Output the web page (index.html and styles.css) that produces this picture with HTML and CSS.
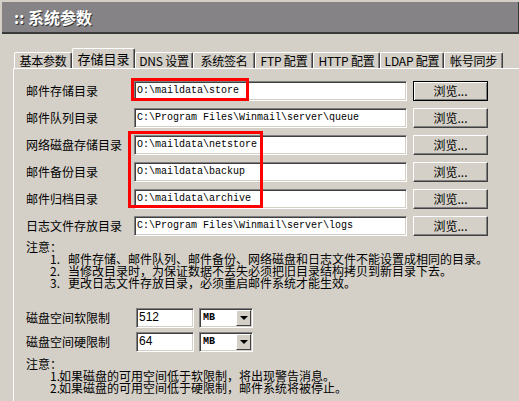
FILE: index.html
```html
<!DOCTYPE html>
<html lang="zh-CN">
<head>
	<meta charset="UTF-8">
	<title>系统参数</title>
	<link rel="stylesheet" href="styles.css">
</head>
<body>
	<div class="title">:: 系统参数</div>

	<div class="tabs">
		<span class="tab">基本参数</span>
		<span class="tab on">存储目录</span>
		<span class="tab">DNS 设置</span>
		<span class="tab">系统签名</span>
		<span class="tab">FTP 配置</span>
		<span class="tab">HTTP 配置</span>
		<span class="tab">LDAP 配置</span>
		<span class="tab">帐号同步</span>
	</div>

	<div class="panel">
		<div class="dirs">
			<label>邮件存储目录</label>
			<div class="txt">O:\maildata\store</div>
			<div class="btn def">浏览...</div>

			<label>邮件队列目录</label>
			<div class="txt">C:\Program Files\Winmail\server\queue</div>
			<div class="btn">浏览...</div>

			<label>网络磁盘存储目录</label>
			<div class="txt">O:\maildata\netstore</div>
			<div class="btn">浏览...</div>

			<label>邮件备份目录</label>
			<div class="txt">O:\maildata\backup</div>
			<div class="btn">浏览...</div>

			<label>邮件归档目录</label>
			<div class="txt">O:\maildata\archive</div>
			<div class="btn">浏览...</div>

			<label>日志文件存放目录</label>
			<div class="txt">C:\Program Files\Winmail\server\logs</div>
			<div class="btn">浏览...</div>
		</div>

		<div class="note">
			<div>注意：</div>
			<div class="item"><span class="num">1.</span>邮件存储、邮件队列、邮件备份、网络磁盘和日志文件不能设置成相同的目录。</div>
			<div class="item"><span class="num">2.</span>当修改目录时，为保证数据不丢失必须把旧目录结构拷贝到新目录下去。</div>
			<div class="item"><span class="num">3.</span>更改日志文件存放目录，必须重启邮件系统才能生效。</div>
		</div>

		<div class="disk">
			<label>磁盘空间软限制</label>
			<div class="txt small">512</div>
			<div class="sel"><span>MB</span><i class="drop"></i></div>

			<label>磁盘空间硬限制</label>
			<div class="txt small">64</div>
			<div class="sel"><span>MB</span><i class="drop"></i></div>
		</div>

		<div class="note note2">
			<div>注意：</div>
			<div class="item"><span class="num">1.</span>如果磁盘的可用空间低于软限制，将出现警告消息。</div>
			<div class="item"><span class="num">2.</span>如果磁盘的可用空间低于硬限制，邮件系统将被停止。</div>
		</div>
	</div>

	<div class="mark mark1"></div>
	<div class="mark mark2"></div>
</body>
</html>
```

FILE: styles.css
```css
*{margin:0;padding:0;box-sizing:border-box;}
body{position:relative;width:519px;height:401px;overflow:hidden;background:#d4d0c8;font:12px "Noto Sans CJK SC",sans-serif;color:#000;}

.title{margin:2px 0 0 2px;height:32px;background:#858385;border-bottom:2px solid #3a3a3a;border-right:1px solid #3a3a3a;color:#fff;font-size:16px;font-weight:bold;line-height:30px;padding-left:12px;text-shadow:1px 1px 0 #333;}

.tabs{display:flex;align-items:flex-end;padding-left:14px;margin-top:14px;height:20px;position:relative;z-index:1;}
.tab{height:16px;line-height:15px;text-align:center;border-top:1px solid #fff;border-left:1px solid #fff;border-right:1px solid #404040;box-shadow:inset -1px 0 0 #808080;border-radius:2px 2px 0 0;white-space:nowrap;letter-spacing:-0.2px;}
.tab:nth-child(1){width:58px;}
.tab:nth-child(2){width:63px;}
.tab:nth-child(3){width:58px;}
.tab:nth-child(4){width:62px;}
.tab:nth-child(5){width:58px;}
.tab:nth-child(6){width:67px;}
.tab:nth-child(7){width:64px;}
.tab:nth-child(8){width:59px;}
.tab.on{height:20px;line-height:19px;background:#d4d0c8;font-size:13px;letter-spacing:0;}

.panel{margin-left:13px;border-top:1px solid #fff;border-left:1px solid #fff;padding:12px 0 0 12px;height:334px;}

.dirs{display:grid;grid-template-columns:102px 273px 75px;column-gap:6px;row-gap:7px;align-items:center;}
.dirs label,.disk label{line-height:20px;white-space:nowrap;}

.txt{height:20px;background:#fff;border-top:1px solid #808080;border-left:1px solid #808080;border-bottom:1px solid #fff;border-right:1px solid #fff;box-shadow:inset 1px 1px 0 #404040,inset -1px -1px 0 #d4d0c8;font:10px "Liberation Mono",monospace;line-height:18px;padding-left:2px;white-space:nowrap;overflow:hidden;}

.btn{height:20px;text-align:center;line-height:18px;border-top:1px solid #fff;border-left:1px solid #fff;border-right:1px solid #404040;border-bottom:1px solid #404040;box-shadow:inset -1px -1px 0 #808080;}
.btn.def{border:1px solid #000;box-shadow:inset 1px 1px 0 #fff,inset -1px -1px 0 #808080;}

.note{margin-top:5px;line-height:12px;}
.note .item{padding-left:24px;}
.note .num{display:inline-block;width:18px;}
.note2{margin-top:6px;}
.note2 .num{width:9px;}

.disk{display:grid;grid-template-columns:105px 58px 54px;column-gap:5px;row-gap:4px;align-items:center;margin-top:19px;}
.txt.small{font:12px "Liberation Sans",sans-serif;line-height:17px;}

.sel{position:relative;height:20px;background:#fff;border-top:1px solid #808080;border-left:1px solid #808080;border-bottom:1px solid #fff;border-right:1px solid #fff;box-shadow:inset 1px 1px 0 #404040,inset -1px -1px 0 #d4d0c8;font:10px "Liberation Mono",monospace;font-weight:bold;line-height:18px;padding-left:3px;}
.drop{position:absolute;right:1px;top:1px;width:15px;height:16px;background:#d4d0c8;border-top:1px solid #fff;border-left:1px solid #fff;border-right:1px solid #404040;border-bottom:1px solid #404040;}
.drop::after{content:"";position:absolute;left:3px;top:5px;border-left:4px solid transparent;border-right:4px solid transparent;border-top:4px solid #000;}

.mark{position:absolute;border:3px solid #f00;}
.mark1{left:131px;top:78px;width:118px;height:23px;}
.mark2{left:128px;top:131px;width:135px;height:77px;}
```
